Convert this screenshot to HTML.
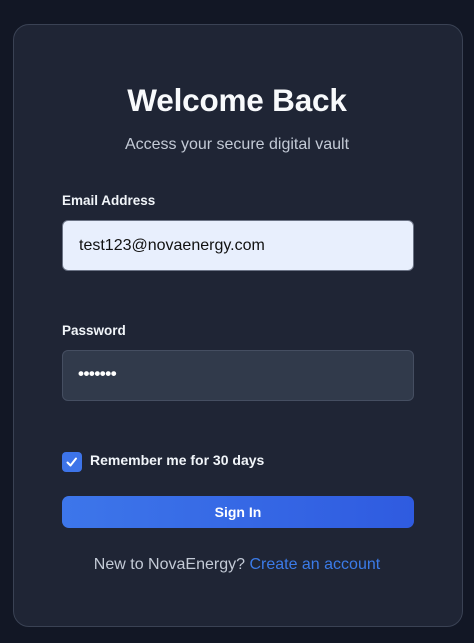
<!DOCTYPE html>
<html><head><meta charset="utf-8"><style>
*{box-sizing:border-box;margin:0;padding:0}
body{width:474px;height:643px;background:#121725;font-family:"Liberation Sans",sans-serif;position:relative;overflow:hidden}
.card{position:absolute;left:13px;top:24px;width:450px;height:603px;background:#1f2535;border:1px solid #3a4254;border-radius:16px}
.abs{position:absolute}
h1{position:absolute;left:0;width:100%;top:82px;text-align:center;font-size:31.5px;font-weight:700;color:#f8fafc;letter-spacing:-0.2px}
.sub{left:0;width:100%;top:136px;text-align:center;font-size:16px;color:#c3cad6}
.lbl{font-size:13.5px;font-weight:700;color:#f1f5f9;left:62px}
.inp{left:62px;width:352px;height:51px;border-radius:6px}
</style></head><body>
<div class="card"></div>
<h1>Welcome Back</h1>
<div class="abs sub">Access your secure digital vault</div>
<div class="abs lbl" style="top:193px">Email Address</div>
<div class="abs inp" style="top:220px;background:#e8effd;border:1px solid #6b7385"></div>
<div class="abs" style="left:79px;top:237px;font-size:16px;color:#111">test123@novaenergy.com</div>
<div class="abs lbl" style="top:323px">Password</div>
<div class="abs inp" style="top:350px;background:#313a4b;border:1px solid #454e61"></div>
<div class="abs" style="left:78px;top:364px;font-size:17px;color:#fff;letter-spacing:-0.5px;font-weight:700">•••••••</div>
<div class="abs" style="left:62px;top:452px;width:20px;height:20px;background:#3d74e9;border-radius:4px">
<svg width="20" height="20" viewBox="0 0 20 20"><path d="M5.5 10.5l3 3 5.5-7" stroke="#fff" stroke-width="2" fill="none" stroke-linecap="round" stroke-linejoin="round"/></svg></div>
<div class="abs" style="left:90px;top:452px;font-size:14px;font-weight:700;color:#f1f5f9">Remember me for 30 days</div>
<div class="abs" style="left:62px;top:496px;width:352px;height:32px;border-radius:7px;background:linear-gradient(90deg,#3d76ea,#2f5be0);color:#fff;font-size:14px;font-weight:700;text-align:center;line-height:32px">Sign In</div>
<div class="abs" style="left:0;width:474px;top:556px;text-align:center;font-size:16px;color:#c3cad6">New to NovaEnergy? <span style="color:#3b7be8">Create an account</span></div>
</body></html>
